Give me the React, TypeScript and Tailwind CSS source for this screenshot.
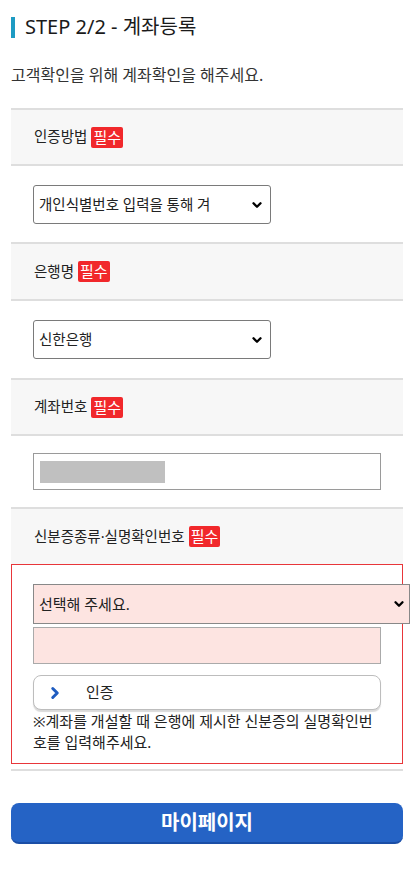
import { ChevronDown, ChevronRight } from "lucide-react";

const font = { fontFamily: '"Noto Sans", "Noto Sans CJK KR", sans-serif' };

function Divider() {
  return <div className="h-[2px] bg-[#dedede]" />;
}

function Badge() {
  return (
    <span className="ml-[4px] inline-flex h-[21px] items-center rounded-[2px] bg-[#f1282b] px-[2px] text-[15px] leading-none text-white">
      필수
    </span>
  );
}

function LabelRow({ label, tall }: { label: string; tall?: boolean }) {
  return (
    <div
      className={`flex items-center bg-[#f7f7f7] px-[23px] text-[14.5px] text-[#222] ${tall ? "h-[55px]" : "h-[54px]"}`}
    >
      <span>{label}</span>
      <Badge />
    </div>
  );
}

function SelectBox({ value }: { value: string }) {
  return (
    <div className="flex h-[39px] w-[238px] items-center justify-between rounded-[3px] border border-[#7a7a7a] bg-white pl-[5px] pr-[6px] text-[14.5px] text-[#222]">
      <span>{value}</span>
      <ChevronDown size={14} strokeWidth={4} className="text-black" />
    </div>
  );
}

export default function App() {
  return (
    <div className="min-h-[869px] w-[414px] bg-white px-[11px] pt-[16px]" style={font}>
      {/* title */}
      <div className="flex h-[22px] items-center">
        <div className="h-[21px] w-[4px] bg-[#1e9bc3]" />
        <h1 className="ml-[10px] text-[20px] leading-none text-[#1a1a1a]">STEP 2/2 - 계좌등록</h1>
      </div>
      <p className="mt-[27px] text-[16px] leading-[20px] text-[#333]">고객확인을 위해 계좌확인을 해주세요.</p>

      <div className="mt-[23px]">
        <Divider />
        <LabelRow label="인증방법" />
        <Divider />
        <div className="px-[22px] pb-[18px] pt-[19px]">
          <SelectBox value="개인식별번호 입력을 통해 겨" />
        </div>
        <Divider />
        <LabelRow label="은행명" tall />
        <Divider />
        <div className="px-[22px] py-[19px]">
          <SelectBox value="신한은행" />
        </div>
        <Divider />
        <LabelRow label="계좌번호" />
        <Divider />
        <div className="px-[22px] py-[17px]">
          <div className="flex h-[37px] w-[348px] items-center border border-[#9a9a9a] bg-white px-[6px]">
            <div className="h-[22px] w-[125px] bg-[#c0c0c0]" />
          </div>
        </div>
        <Divider />
        <LabelRow label="신분증종류·실명확인번호" tall />

        {/* error box */}
        <div className="border border-[#e8363a] px-[21px] pb-[10px] pt-[19px]">
          <div className="flex h-[40px] w-[377px] items-center justify-between border border-[#888] bg-[#fde4e1] pl-[5px] pr-[3px] text-[15px] text-[#222]">
            <span>선택해 주세요.</span>
            <ChevronDown size={14} strokeWidth={4} className="text-black" />
          </div>
          <div className="mt-[3px] h-[37px] w-[348px] border border-[#aaa] bg-[#fde4e1]" />
          <button className="mt-[11px] flex h-[35px] w-[348px] items-center rounded-[8px] border border-[#bdbdbd] bg-white pl-[12px] text-[15px] text-[#222] shadow-[0_2px_1px_rgba(0,0,0,0.15)]">
            <ChevronRight size={18} strokeWidth={4} className="text-[#1f5cc0]" />
            <span className="ml-[22px]">인증</span>
          </button>
          <p className="mt-[1px] w-[348px] text-[15px] leading-[21px] text-[#222]">
            ※계좌를 개설할 때 은행에 제시한 신분증의 실명확인번호를 입력해주세요.
          </p>
        </div>
        <div className="mt-[5px]">
          <Divider />
        </div>
      </div>

      <button className="mt-[32px] flex h-[41px] w-[392px] items-center justify-center rounded-[8px] border-b-2 border-[#1a4ea6] bg-[#2563c5] text-[20px] font-bold text-white">
        마이페이지
      </button>
    </div>
  );
}
